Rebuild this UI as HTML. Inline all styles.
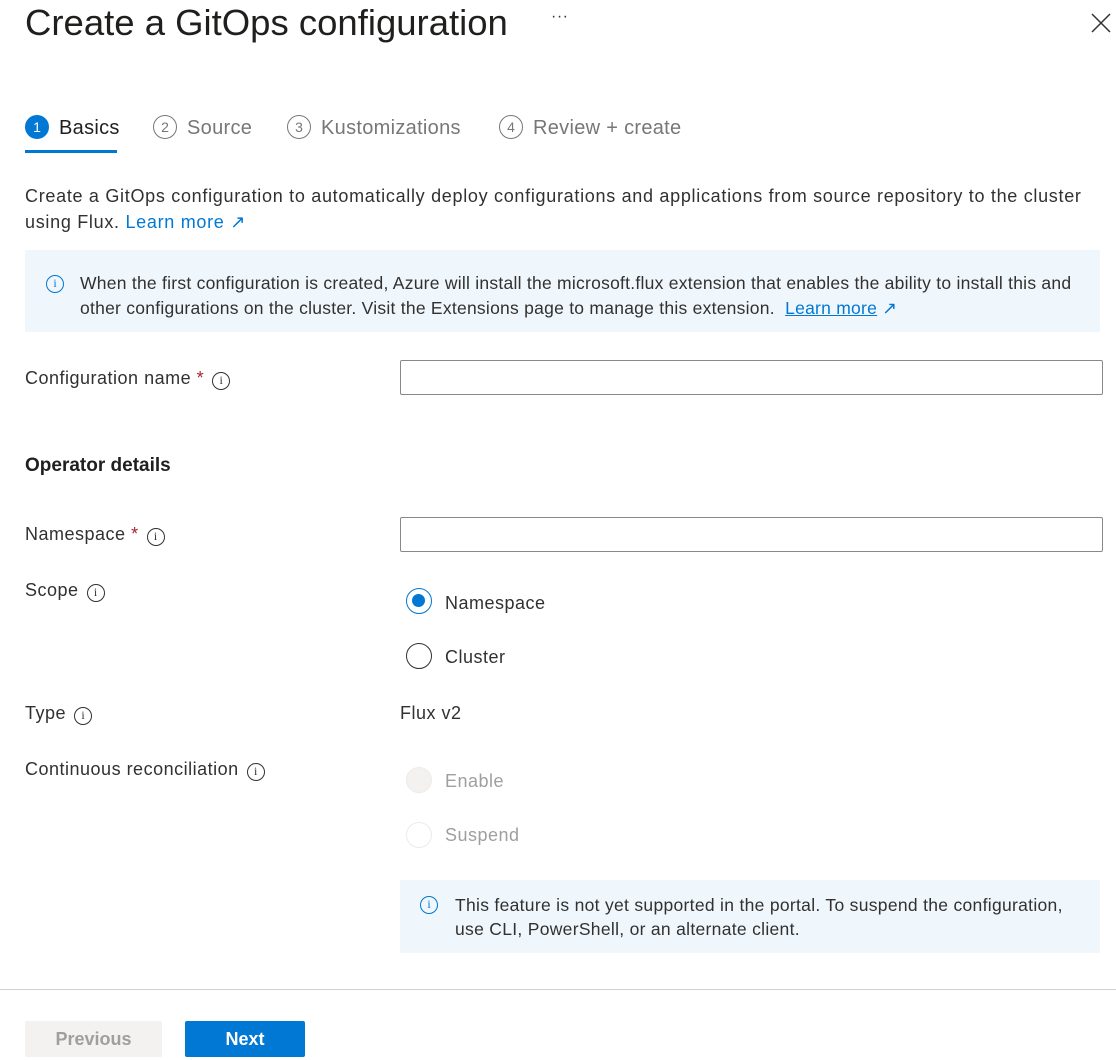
<!DOCTYPE html>
<html><head><meta charset="utf-8"><style>
*{margin:0;padding:0;box-sizing:border-box}
body{width:1116px;height:1060px;background:#fff;font-family:"Liberation Sans",sans-serif;color:#323130;position:relative;overflow:hidden;font-size:18px;letter-spacing:0.5px}
.a{position:absolute;white-space:nowrap}
.ic{display:inline-block;width:18px;height:18px;border:1.5px solid #323130;border-radius:50%;font-size:12px;text-align:center;line-height:15px;font-family:"Liberation Serif",serif;letter-spacing:0;vertical-align:0px;margin-left:8px}
.ib{border-color:#0078d4;color:#0078d4;position:absolute;margin:0}
.inp{position:absolute;left:400px;width:703px;height:35px;border:1px solid #8a8886;border-radius:2px}
.req{color:#a4262c}
.tab{position:absolute;top:115px;font-size:20px;color:#797775;white-space:nowrap;letter-spacing:0.3px}
.num{display:inline-block;width:24px;height:24px;border:1px solid #797775;border-radius:50%;font-size:14px;text-align:center;line-height:22px;vertical-align:2px;margin-right:10px;letter-spacing:0}
.rad{position:absolute;left:406px;width:26px;height:26px;border-radius:50%;border:1.5px solid #323130}
</style></head><body>
<div class="a" style="left:25px;top:2px;font-size:36.5px;color:#201f1e;letter-spacing:0">Create a GitOps configuration</div>
<div class="a" style="left:551px;top:8px;font-size:16px;color:#323130">···</div>
<svg class="a" style="left:1091px;top:13px" width="20" height="20"><path d="M1 1L19 19M19 1L1 19" stroke="#323130" stroke-width="1.5"/></svg>

<div class="tab" style="left:25px;color:#201f1e"><span class="num" style="background:#0078d4;border-color:#0078d4;color:#fff">1</span>Basics</div>
<div style="position:absolute;left:25px;top:150px;width:92px;height:3px;background:#0078d4"></div>
<div class="tab" style="left:153px"><span class="num">2</span>Source</div>
<div class="tab" style="left:287px"><span class="num">3</span>Kustomizations</div>
<div class="tab" style="left:499px"><span class="num">4</span>Review + create</div>

<div class="a" style="left:25px;top:186px;letter-spacing:0.7px">Create a GitOps configuration to automatically deploy configurations and applications from source repository to the cluster</div>
<div class="a" style="left:25px;top:212px;letter-spacing:0.7px">using Flux. <span style="color:#0078d4">Learn more ↗</span></div>

<div style="position:absolute;left:25px;top:250px;width:1075px;height:82px;background:#eff6fc"></div>
<div class="ic ib" style="left:46px;top:275px">i</div>
<div class="a" style="left:80px;top:273px;font-size:17.5px;letter-spacing:0.25px">When the first configuration is created, Azure will install the microsoft.flux extension that enables the ability to install this and</div>
<div class="a" style="left:80px;top:298px;font-size:17.5px;letter-spacing:0.25px">other configurations on the cluster. Visit the Extensions page to manage this extension. &nbsp;<span style="color:#0078d4;text-decoration:underline">Learn more</span> <span style="color:#0078d4">↗</span></div>

<div class="a" style="left:25px;top:368px">Configuration name <span class="req">*</span><span class="ic">i</span></div>
<div class="inp" style="top:360px"></div>

<div class="a" style="left:25px;top:455px;font-weight:bold;color:#201f1e;font-size:19px;letter-spacing:0">Operator details</div>

<div class="a" style="left:25px;top:524px">Namespace <span class="req">*</span><span class="ic">i</span></div>
<div class="inp" style="top:517px"></div>

<div class="a" style="left:25px;top:580px">Scope<span class="ic">i</span></div>
<div class="rad" style="top:588px;border-color:#0078d4"><div style="position:absolute;left:5px;top:5px;width:13px;height:13px;border-radius:50%;background:#0078d4"></div></div>
<div class="a" style="left:445px;top:593px">Namespace</div>
<div class="rad" style="top:643px"></div>
<div class="a" style="left:445px;top:647px">Cluster</div>

<div class="a" style="left:25px;top:703px">Type<span class="ic">i</span></div>
<div class="a" style="left:400px;top:703px">Flux v2</div>

<div class="a" style="left:25px;top:759px">Continuous reconciliation<span class="ic">i</span></div>
<div class="rad" style="top:767px;border-color:#edebe9;background:#f3f2f1"></div>
<div class="a" style="left:445px;top:771px;color:#a19f9d">Enable</div>
<div class="rad" style="top:822px;border-color:#edebe9"></div>
<div class="a" style="left:445px;top:825px;color:#a19f9d">Suspend</div>

<div style="position:absolute;left:400px;top:880px;width:700px;height:73px;background:#eff6fc"></div>
<div class="ic ib" style="left:420px;top:896px">i</div>
<div class="a" style="left:455px;top:895px;font-size:17.5px;letter-spacing:0.3px">This feature is not yet supported in the portal. To suspend the configuration,</div>
<div class="a" style="left:455px;top:919px;font-size:17.5px;letter-spacing:0.3px">use CLI, PowerShell, or an alternate client.</div>

<div style="position:absolute;left:0;top:989px;width:1116px;height:1px;background:#d2d0ce"></div>
<div style="position:absolute;left:25px;top:1021px;width:137px;height:36px;background:#f3f2f1;border-radius:2px;color:#a19f9d;font-weight:bold;text-align:center;line-height:36px;font-size:18px;letter-spacing:0">Previous</div>
<div style="position:absolute;left:185px;top:1021px;width:120px;height:36px;background:#0078d4;border-radius:2px;color:#fff;font-weight:bold;text-align:center;line-height:36px;font-size:18px;letter-spacing:0">Next</div>
</body></html>
